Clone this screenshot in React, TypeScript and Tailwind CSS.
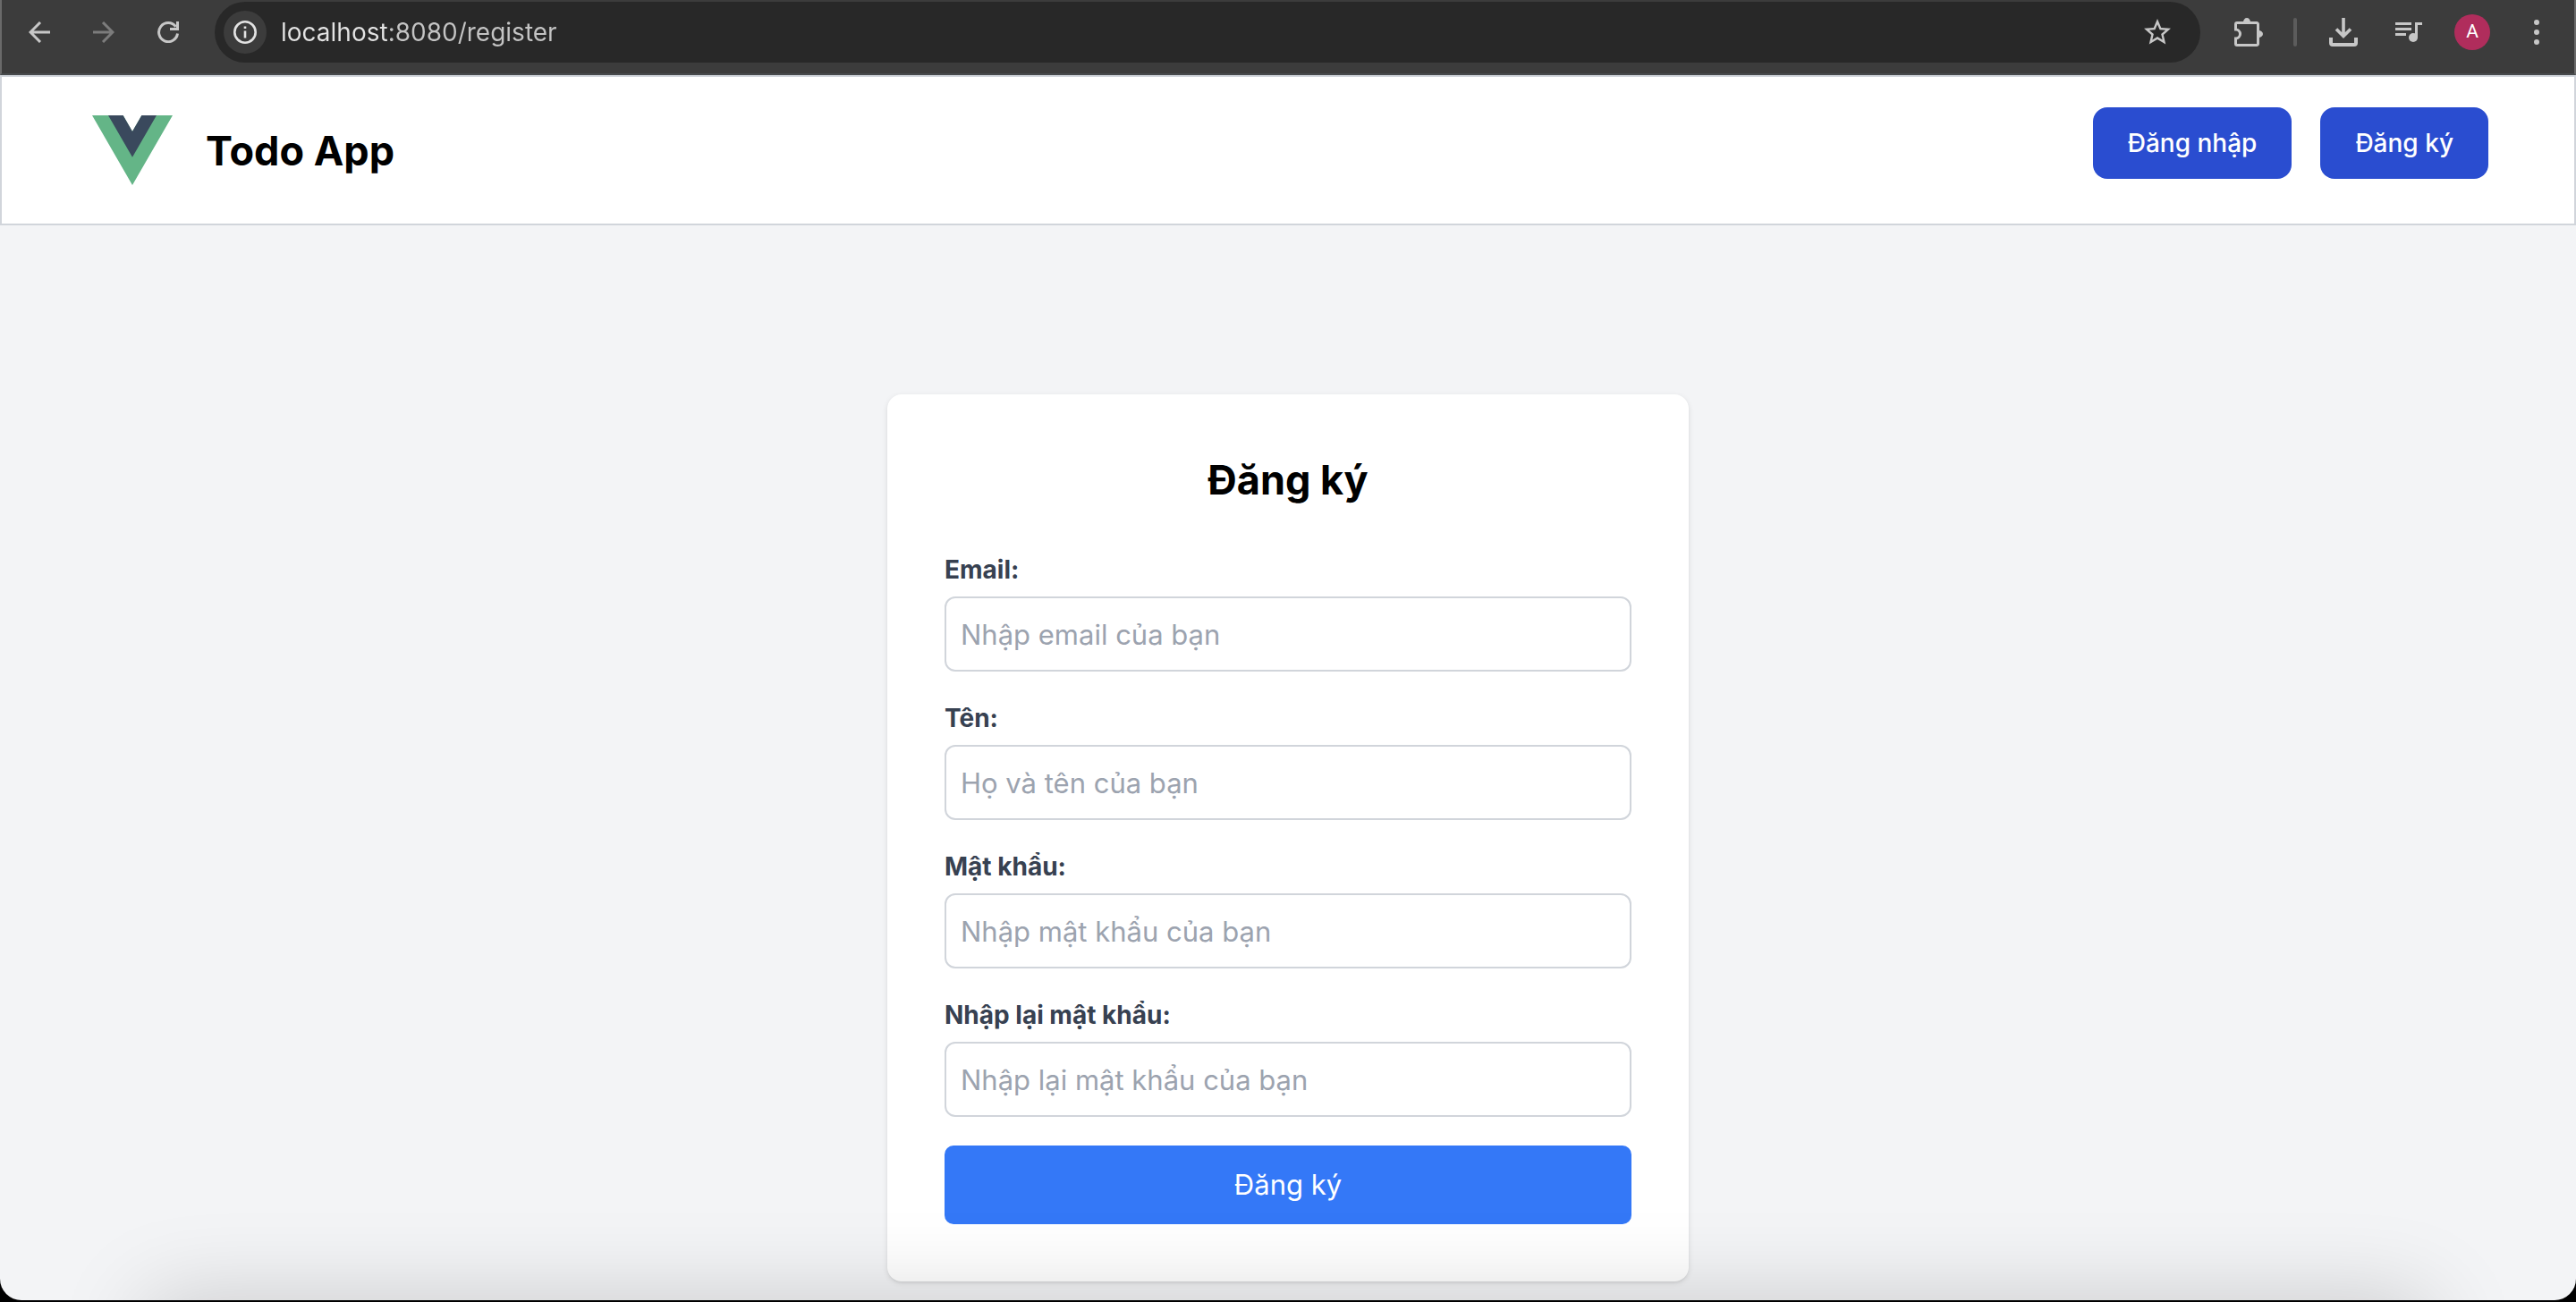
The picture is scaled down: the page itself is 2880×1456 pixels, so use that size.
import type { ReactNode } from 'react';
import { MdStarBorder } from 'react-icons/md';

function ToolButton({ label, className = 'text-[#c7c7c7]', children }: { label: string; className?: string; children: ReactNode }) {
  return (
    <button type="button" aria-label={label} className={`flex size-12 shrink-0 items-center justify-center ${className}`}>
      {children}
    </button>
  );
}

function BackIcon() {
  return (
    <svg viewBox="0 0 24 24" className="size-6" fill="none" stroke="currentColor" strokeWidth="3">
      <path d="M24 12H2.5M13 1 2 12l11 11" />
    </svg>
  );
}

function ForwardIcon() {
  return (
    <svg viewBox="0 0 24 24" className="size-6" fill="none" stroke="currentColor" strokeWidth="3">
      <path d="M0 12h21.500M11 1l11 11-11 11" />
    </svg>
  );
}

function ReloadIcon() {
  return (
    <svg viewBox="0 0 24 24" className="size-6" fill="none" stroke="currentColor" strokeWidth="3">
      <path d="M22.500 13.500A10.500 10.500 0 1 1 20.500 5.800" />
      <path d="M22.500 0v8.500H14" />
    </svg>
  );
}

function InfoIcon() {
  return (
    <svg viewBox="0 0 26 26" className="size-[26px]" fill="none" stroke="currentColor" strokeWidth="2.600">
      <circle cx="13" cy="13" r="11.700" />
      <path d="M13 11.500v8M13 6.500v2.500" />
    </svg>
  );
}

function ExtensionsIcon() {
  return (
    <svg viewBox="-4 0 36 32" className="h-8 w-9">
      <path
        d="M3 5.500h22a1.500 1.500 0 0 1 1.500 1.500v22a1.500 1.500 0 0 1-1.500 1.500H3A1.500 1.500 0 0 1 1.500 29v-6a5 5 0 0 0 0-10V7A1.500 1.500 0 0 1 3 5.500Z"
        fill="none"
        stroke="currentColor"
        strokeWidth="3"
      />
      <path d="M10 5a4 5 0 0 1 8 0ZM27 14a5 4 0 0 1 0 8Z" fill="currentColor" />
    </svg>
  );
}

function DownloadIcon() {
  return (
    <svg viewBox="0 0 32 32" className="size-8" fill="none" stroke="currentColor" strokeWidth="4">
      <path d="M16 0v21M8 12.500l8 8 8-8" strokeWidth="3.600" />
      <path d="M2 22v6a2 2 0 0 0 2 2h24a2 2 0 0 0 2-2v-6" />
    </svg>
  );
}

function MediaIcon() {
  return (
    <svg viewBox="-2 0 32 24" className="h-6 w-8" fill="currentColor">
      <path d="M0 1h18v3H0zM0 7h18v3H0zM0 13h12v3H0zM22 1h8v3h-5v14h-3z" />
      <circle cx="20" cy="18" r="5" />
    </svg>
  );
}

function MoreIcon() {
  return (
    <svg viewBox="0 0 6 28" className="h-7 w-[6px]" fill="currentColor">
      <circle cx="3" cy="3" r="3" />
      <circle cx="3" cy="14" r="3" />
      <circle cx="3" cy="25" r="3" />
    </svg>
  );
}

function BrowserBar() {
  return (
    <div className="flex items-start border-x-2 border-b-2 border-x-[#6a6a6a] border-b-[#474a4c] bg-[#3c3c3c] px-[18px] pt-[2px] pb-3">
      <div className="flex h-[68px] items-center gap-6 pr-7">
        <ToolButton label="Back">
          <BackIcon />
        </ToolButton>
        <ToolButton label="Forward" className="text-[#7c7c7c]">
          <ForwardIcon />
        </ToolButton>
        <ToolButton label="Reload">
          <ReloadIcon />
        </ToolButton>
      </div>
      <div className="flex h-[68px] flex-1 items-center rounded-full bg-[#282828] pr-6 pl-[10px]">
        <ToolButton label="Site information" className="rounded-full bg-[#3c3c3c] text-[#e3e3e3]">
          <InfoIcon />
        </ToolButton>
        <input
          type="text"
          aria-label="Address"
          defaultValue="localhost:8080/register"
          className="ml-4 h-10 min-w-0 flex-1 bg-[linear-gradient(to_right,#e3e3e3_120px,#c4c4c4_120px)] bg-clip-text text-[28px] leading-10 text-transparent outline-none"
        />
        <ToolButton label="Bookmark this page">
          <MdStarBorder className="size-9" />
        </ToolButton>
      </div>
      <div className="flex h-[68px] items-center pl-7">
        <ToolButton label="Extensions">
          <ExtensionsIcon />
        </ToolButton>
        <span className="mx-7 h-8 w-1 rounded-full bg-[#5c5c5c]" />
        <div className="flex items-center gap-6">
          <ToolButton label="Downloads">
            <DownloadIcon />
          </ToolButton>
          <ToolButton label="Media controls">
            <MediaIcon />
          </ToolButton>
          <ToolButton label="Profile">
            <span className="flex size-10 items-center justify-center rounded-full bg-[#b02d5c] font-['Roboto',sans-serif] text-[21px] text-white">A</span>
          </ToolButton>
          <ToolButton label="More options">
            <MoreIcon />
          </ToolButton>
        </div>
      </div>
    </div>
  );
}

function VueLogo() {
  return (
    <svg viewBox="0 0 261.76 226.69" className="h-[78px] w-[90px]" role="img" aria-label="Vue logo">
      <path d="M161.096.001l-30.225 52.351L100.647.001H-.005l130.877 226.688L261.749.001z" fill="#64b587" />
      <path d="M161.096.001l-30.225 52.351L100.647.001H52.346l78.526 136.010L209.398.001z" fill="#3a495d" />
    </svg>
  );
}

function SiteHeader() {
  return (
    <header className="flex items-start justify-between border-2 border-[#d1d5db] bg-white pt-[34px] pr-24 pb-[41px] pl-[101px]">
      <a href="/" className="flex items-start gap-[37px] pt-[9px]">
        <VueLogo />
        <span className="text-[45px] leading-[80px] font-bold text-black">Todo App</span>
      </a>
      <nav className="flex gap-8">
        <a href="/login" className="rounded-2xl bg-[#2a4dd0] px-[39px] py-5 text-[28px] leading-10 font-medium text-white">
          Đăng nhập
        </a>
        <a href="/register" className="rounded-2xl bg-[#2a4dd0] px-[39px] py-5 text-[28px] leading-10 font-medium text-white">
          Đăng ký
        </a>
      </nav>
    </header>
  );
}

const fields = [
  { id: 'email', type: 'email', label: 'Email:', placeholder: 'Nhập email của bạn' },
  { id: 'name', type: 'text', label: 'Tên:', placeholder: 'Họ và tên của bạn' },
  { id: 'password', type: 'password', label: 'Mật khẩu:', placeholder: 'Nhập mật khẩu của bạn' },
  { id: 'confirm', type: 'password', label: 'Nhập lại mật khẩu:', placeholder: 'Nhập lại mật khẩu của bạn' },
];

function RegisterForm() {
  return (
    <form className="w-full max-w-4xl rounded-2xl bg-white p-16 shadow-[0_2px_6px_0_rgba(0,0,0,0.1),0_2px_4px_-2px_rgba(0,0,0,0.1)]">
      <h1 className="mb-12 text-center text-[45px] leading-[64px] font-bold text-black">Đăng ký</h1>
      {fields.map((field) => (
        <div key={field.id} className="mb-8">
          <label htmlFor={field.id} className="mb-[10px] block text-[28px] leading-10 font-bold text-[#374151]">
            {field.label}
          </label>
          <input
            id={field.id}
            type={field.type}
            placeholder={field.placeholder}
            className="block h-[84px] w-full rounded-xl border-2 border-[#d1d5db] bg-transparent px-4 text-[31px] leading-[48px] text-black placeholder:text-[#9ca3af]"
          />
        </div>
      ))}
      <button type="submit" className="block w-full rounded-[10px] bg-[#3478f7] py-5 text-[31px] leading-[48px] text-white">
        Đăng ký
      </button>
    </form>
  );
}

export default function App() {
  return (
    <div className="flex min-h-screen flex-col bg-black pb-[2px] font-['Inter',sans-serif]">
      <div className="relative flex flex-1 flex-col overflow-hidden rounded-b-3xl bg-[#f3f4f6]">
        <BrowserBar />
        <SiteHeader />
        <main className="flex flex-1 items-start justify-center px-4 pt-[189px] pb-5">
          <RegisterForm />
        </main>
        <div className="pointer-events-none absolute inset-x-[165px] top-full h-40 shadow-[0_0_100px_rgba(0,0,0,0.18)]" />
      </div>
    </div>
  );
}
